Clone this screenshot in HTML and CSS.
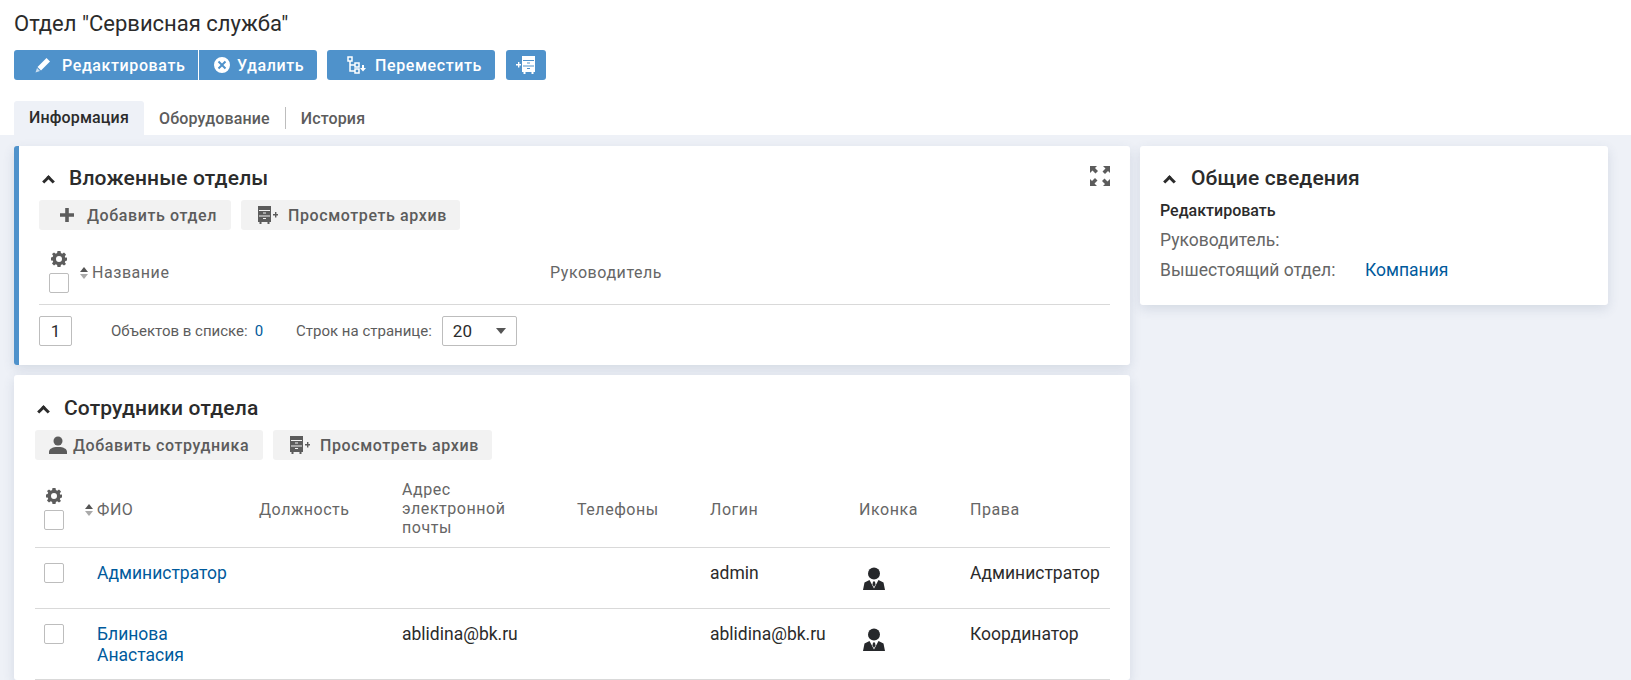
FILE: index.html
```html
<!DOCTYPE html>
<html lang="ru">
<head>
    <meta charset="UTF-8">
    <meta name="viewport" content="width=device-width, initial-scale=1.0">
    <title>Отдел "Сервисная служба"</title>
    <link rel="stylesheet" href="styles.css">
</head>
<body>
<svg class="sprite" width="0" height="0">
    <symbol id="i-pencil" viewBox="0 0 16 16"><path d="M11.500 1 15 4.500 6 13.500 2.500 10Z"/><path d="M2 11 5 14 .5 15.500Z" opacity=".7"/></symbol>
    <symbol id="i-cross" viewBox="0 0 16 16"><path fill-rule="evenodd" d="M8 0a8 8 0 1 0 0 16A8 8 0 0 0 8 0ZM5.200 3.800 8 6.600l2.800-2.800 1.400 1.400L9.400 8l2.800 2.800-1.400 1.400L8 9.400l-2.800 2.800-1.400-1.400L6.600 8 3.800 5.200Z"/></symbol>
    <symbol id="i-tree" viewBox="0 0 20 18"><path fill="none" stroke="currentColor" stroke-width="1.500" d="M1 1h4v4H1zM8 7h4v4H8zM8 13h4v4H8zM3 5v10h5M3 9h5"/><path d="M15 9h2v3h2l-3 3.500-3-3.500h2z"/></symbol>
    <symbol id="i-cabinet" viewBox="0 0 20 18"><path fill-rule="evenodd" d="M6 0h13v16h-1.500v2h-2v-2h-6v2h-2v-2H6ZM7 4v1h11V4ZM7 9.500v1h11v-1ZM11 6.500v1h3v-1ZM11 12v1h3v-1Z"/><path d="M2 6h1.400v2H5v1.400H3.400v2H2v-2H0V8h2Z"/></symbol>
    <symbol id="i-cabinet-right" viewBox="0 0 20 18"><path fill-rule="evenodd" d="M0 0h13v16h-1.500v2h-2v-2h-6v2h-2v-2H0ZM1 4v1h11V4ZM1 9.500v1h11v-1ZM5 6.500v1h3v-1ZM5 12v1h3v-1Z"/><path d="M17 6h1.400v2H20v1.400h-1.600v2H17v-2h-2V8h2Z"/></symbol>
    <symbol id="i-plus" viewBox="0 0 14 14"><path d="M5.200 0h3.600v5.200H14v3.600H8.800V14H5.200V8.800H0V5.200h5.200Z"/></symbol>
    <symbol id="i-gear" viewBox="0 0 16 16"><path fill-rule="evenodd" d="M6.500 0h3l.4 2.100 1.300.6L13 1.500 15 3.600l-1.200 1.800.6 1.300L16 6.600v3l-1.600.4-.6 1.300 1.200 1.700L13 14.500l-1.800-1.200-1.300.6L9.500 16h-3l-.4-2.100-1.300-.6L3 14.500 1 12.400l1.200-1.700-.6-1.300L0 9.500v-3l1.600-.4.600-1.300L1 3.100 3 1.500l1.800 1.200 1.300-.6ZM8 5a3 3 0 1 0 0 6 3 3 0 0 0 0-6Z"/></symbol>
    <symbol id="i-user" viewBox="0 0 18 18"><circle cx="9" cy="5" r="4.500"/><path d="M0 18v-2c0-3 3-5 9-5s9 2 9 5v2Z"/></symbol>
    <symbol id="i-suit" viewBox="0 0 22 24"><circle cx="11" cy="6.500" r="6"/><path d="M6.500 13 1.500 15.500 0 23h22l-1.500-7.500-5-2.500L11 21.500Z"/><path d="M10 14.500h2l.5 3-1.500 2.500-1.500-2.500Z"/></symbol>
    <symbol id="i-expand" viewBox="0 0 20 20"><path d="M0 0h7L5 2l3 3-2.500 2.500-3-3L0 7ZM20 20h-7l2-2-3-3 2.500-2.500 3 3L20 13ZM20 0v7l-2-2-3 3-2.500-2.500 3-3L13 0ZM0 20v-7l2 2 3-3 2.500 2.500-3 3L7 20Z"/></symbol>
</svg>

<header class="page-head">
    <h1>Отдел "Сервисная служба"</h1>
    <div class="actions">
        <div class="btn-group">
            <a class="btn btn-edit"><svg class="ico ico-16"><use href="#i-pencil"/></svg>Редактировать</a>
            <a class="btn btn-del"><svg class="ico ico-16"><use href="#i-cross"/></svg>Удалить</a>
        </div>
        <a class="btn btn-move"><svg class="ico ico-tree"><use href="#i-tree"/></svg>Переместить</a>
        <a class="btn btn-icon"><svg class="ico ico-cab"><use href="#i-cabinet"/></svg></a>
    </div>
    <nav class="tabs">
        <a class="tab active">Информация</a>
        <a class="tab">Оборудование</a>
        <span class="tab-sep"></span>
        <a class="tab">История</a>
    </nav>
</header>

<main class="content">
    <div class="col-main">
        <section class="card card-accent">
            <svg class="expand"><use href="#i-expand"/></svg>
            <h2 class="card-title"><span class="chevron"></span>Вложенные отделы</h2>
            <div class="tools">
                <a class="tool tool-add"><svg class="ico ico-plus"><use href="#i-plus"/></svg>Добавить отдел</a>
                <a class="tool tool-arch"><svg class="ico ico-cab"><use href="#i-cabinet-right"/></svg>Просмотреть архив</a>
            </div>
            <table class="grid grid-sub">
                <colgroup><col class="c-sel"><col class="c-title"><col></colgroup>
                <thead>
                <tr>
                    <th class="sel"><svg class="gear"><use href="#i-gear"/></svg><span class="check"></span></th>
                    <th><span class="sort"></span>Название</th>
                    <th>Руководитель</th>
                </tr>
                </thead>
            </table>
            <div class="pager">
                <span class="page-num">1</span>
                <span class="count">Объектов в списке:<a class="link count-val">0</a></span>
                <span class="per-page">Строк на странице:</span>
                <span class="select">20<i class="caret"></i></span>
            </div>
        </section>

        <section class="card card-staff">
            <h2 class="card-title"><span class="chevron"></span>Сотрудники отдела</h2>
            <div class="tools">
                <a class="tool tool-person"><svg class="ico ico-user"><use href="#i-user"/></svg>Добавить сотрудника</a>
                <a class="tool tool-arch"><svg class="ico ico-cab"><use href="#i-cabinet-right"/></svg>Просмотреть архив</a>
            </div>
            <table class="grid grid-staff">
                <colgroup>
                    <col class="c1"><col class="c2"><col class="c3"><col class="c4"><col class="c5"><col class="c6"><col class="c7"><col>
                </colgroup>
                <thead>
                <tr>
                    <th class="sel"><svg class="gear"><use href="#i-gear"/></svg><span class="check"></span></th>
                    <th><span class="sort"></span>ФИО</th>
                    <th>Должность</th>
                    <th class="wrap">Адрес электронной почты</th>
                    <th>Телефоны</th>
                    <th>Логин</th>
                    <th>Иконка</th>
                    <th>Права</th>
                </tr>
                </thead>
                <tbody>
                <tr class="row-one">
                    <td class="sel"><span class="check"></span></td>
                    <td class="name"><a class="link">Администратор</a></td>
                    <td></td>
                    <td></td>
                    <td></td>
                    <td>admin</td>
                    <td><svg class="suit"><use href="#i-suit"/></svg></td>
                    <td>Администратор</td>
                </tr>
                <tr>
                    <td class="sel"><span class="check"></span></td>
                    <td class="name"><a class="link">Блинова<br>Анастасия</a></td>
                    <td></td>
                    <td>ablidina@bk.ru</td>
                    <td></td>
                    <td>ablidina@bk.ru</td>
                    <td><svg class="suit"><use href="#i-suit"/></svg></td>
                    <td>Координатор</td>
                </tr>
                </tbody>
            </table>
        </section>
    </div>

    <aside class="col-side">
        <section class="card card-info">
            <h2 class="card-title"><span class="chevron"></span>Общие сведения</h2>
            <div class="info-edit">Редактировать</div>
            <div class="info-row"><span class="info-label">Руководитель:</span></div>
            <div class="info-row"><span class="info-label">Вышестоящий отдел:</span><a class="link">Компания</a></div>
        </section>
    </aside>
</main>
</body>
</html>
```

FILE: styles.css
```css
* {
    box-sizing: border-box;
}

html, body {
    height: 100%;
}

body {
    background-color: #eef1f7;
    color: #212121;
    font-family: Roboto, Arial, sans-serif;
    font-size: 16px;
    margin: 0;
    overflow: hidden;
    display: flex;
    flex-direction: column;
}

.sprite {
    position: absolute;
}

.ico {
    fill: currentColor;
    flex: none;
}

.link {
    color: #005a9c;
}

/* header */
.page-head {
    background-color: #fff;
    padding: 12px 0 0 14px;
    height: 135px;
    flex: none;
}

h1 {
    font-size: 22px;
    font-weight: 400;
    line-height: 24px;
    margin: 0 0 14px;
    color: #2b2b2b;
}

.actions {
    display: flex;
    gap: 10px;
    height: 30px;
}

.btn-group {
    display: flex;
    gap: 1px;
}

.btn {
    background-color: #4f92cb;
    color: #fff;
    font-size: 16px;
    font-weight: 500;
    letter-spacing: 0.6px;
    display: flex;
    align-items: center;
    border-radius: 3px;
}

.btn-edit {
    width: 184px;
    padding-left: 21px;
    gap: 11px;
    border-radius: 3px 0 0 3px;
}

.btn-del {
    width: 118px;
    padding-left: 15px;
    gap: 7px;
    border-radius: 0 3px 3px 0;
}

.btn-move {
    width: 168px;
    padding-left: 20px;
    gap: 8px;
}

.btn-icon {
    width: 40px;
    margin-left: 1px;
    justify-content: center;
}

.ico-16 {
    width: 16px;
    height: 16px;
}

.ico-tree {
    width: 20px;
    height: 18px;
}

.ico-cab {
    width: 20px;
    height: 18px;
}

.tabs {
    display: flex;
    align-items: center;
    height: 34px;
    margin-top: 21px;
}

.tab {
    font-size: 16px;
    font-weight: 500;
    color: #5c5c5c;
    letter-spacing: 0.15px;
    padding: 0 15px 0 14px;
}

.tab.active {
    background-color: #eef1f7;
    color: #2b2b2b;
    height: 34px;
    line-height: 34px;
    width: 130px;
    padding: 0 15px;
    border-radius: 3px 3px 0 0;
    margin-right: 1px;
}

.tab-sep + .tab {
    padding-left: 15px;
}

.tab-sep {
    width: 1px;
    height: 22px;
    background-color: #bdbdbd;
}

/* content */
.content {
    display: grid;
    grid-template-columns: 1116px 468px;
    gap: 10px;
    padding: 11px 0 0 14px;
    align-items: start;
}

.col-main {
    display: flex;
    flex-direction: column;
    gap: 10px;
}

.card {
    background-color: #fff;
    border-radius: 3px;
    box-shadow: 0 4px 12px rgba(60, 80, 110, 0.14);
    position: relative;
}

.card-accent {
    border-left: 5px solid #4f92cb;
    height: 219px;
    padding: 17px 20px 0 20px;
}

.card-staff {
    padding: 18px 20px 0 21px;
}

.card-info {
    height: 159px;
    padding: 17px 20px 0 20px;
}

.card-title {
    font-size: 21px;
    font-weight: 500;
    letter-spacing: 0.15px;
    line-height: 30px;
    margin: 0;
    color: #2b2b2b;
    display: flex;
    align-items: center;
}

.chevron {
    width: 9px;
    height: 9px;
    border-left: 3px solid #2b2b2b;
    border-top: 3px solid #2b2b2b;
    transform: rotate(45deg);
    margin: 6px 16px 0 4px;
    flex: none;
}

.card-accent .chevron {
    margin: 6px 16px 0 5px;
}

.card-info .chevron {
    margin: 6px 17px 0 5px;
}

.expand {
    position: absolute;
    right: 20px;
    top: 20px;
    width: 20px;
    height: 20px;
    fill: #5c5c5c;
}

/* tool buttons */
.tools {
    display: flex;
    gap: 10px;
    height: 30px;
    margin-top: 7px;
}

.tool {
    background-color: #f2f2f2;
    color: #5c5c5c;
    font-size: 16px;
    font-weight: 500;
    letter-spacing: 0.6px;
    display: flex;
    align-items: center;
    border-radius: 3px;
}

.tool-add {
    width: 192px;
    padding-left: 21px;
    gap: 13px;
}

.tool-arch {
    width: 219px;
    padding-left: 17px;
    gap: 10px;
}

.tool-person {
    width: 228px;
    padding-left: 14px;
    gap: 6px;
}

.ico-plus {
    width: 14px;
    height: 14px;
}

.ico-user {
    width: 18px;
    height: 18px;
}

/* tables */
.grid {
    width: 100%;
    border-collapse: collapse;
    table-layout: fixed;
}

.grid th {
    font-size: 16px;
    font-weight: 400;
    color: #666;
    letter-spacing: 0.55px;
    line-height: 19px;
    text-align: left;
    padding: 0;
    border-bottom: 1px solid #d9d9d9;
}

.grid th.wrap {
    padding-right: 30px;
}

.grid td {
    font-size: 17.500px;
    line-height: 21px;
    vertical-align: top;
    padding: 15px 0 13px;
    border-bottom: 1px solid #d9d9d9;
    color: #2b2b2b;
}

.grid .sel {
    padding-left: 10px;
    vertical-align: top;
}

.grid th.sel {
    padding-top: 10px;
    padding-bottom: 10px;
}

.check {
    display: block;
    width: 20px;
    height: 20px;
    background-color: #fff;
    border: 1px solid #bdbdbd;
    border-radius: 2px;
}

.gear {
    display: block;
    width: 16px;
    height: 16px;
    margin: 0 0 6px 2px;
    fill: #5c5c5c;
}

.sort {
    position: relative;
    display: inline-block;
    width: 9px;
    height: 12px;
    margin-right: 3px;
    vertical-align: -1px;
}

.sort::before,
.sort::after {
    content: "";
    position: absolute;
    left: 0;
    border-left: 4px solid transparent;
    border-right: 4px solid transparent;
}

.sort::before {
    top: 0;
    border-bottom: 5px solid #555;
}

.sort::after {
    bottom: 0;
    border-top: 5px solid #aaa;
}

.grid-sub {
    margin-top: 11px;
}

.grid-sub th {
    height: 63px;
}

.c-sel {
    width: 41px;
}

.c-title {
    width: 470px;
}

.grid-staff {
    margin-top: 15px;
}

.grid-staff th {
    height: 72px;
    padding-bottom: 2px;
}

.grid-staff th.wrap {
    padding-bottom: 4px;
}

.grid-staff th.sel {
    padding-top: 13px;
}

.grid-staff .sel {
    padding-left: 9px;
}

.c1 { width: 50px; }
.c2 { width: 174px; }
.c3 { width: 143px; }
.c4 { width: 175px; }
.c5 { width: 133px; }
.c6 { width: 149px; }
.c7 { width: 111px; }

.name {
    padding-left: 12px !important;
}

.row-one td {
    height: 61px;
}

.suit {
    display: block;
    width: 22px;
    height: 24px;
    margin: 4px 0 0 4px;
    fill: #26282b;
}

/* pager */
.pager {
    display: flex;
    align-items: center;
    height: 30px;
    margin-top: 11px;
    font-size: 15px;
    color: #5c5c5c;
}

.page-num {
    width: 33px;
    height: 30px;
    line-height: 28px;
    text-align: center;
    font-size: 17px;
    color: #2b2b2b;
    border: 1px solid #bdbdbd;
    border-radius: 2px;
}

.count {
    margin-left: 39px;
}

.count-val {
    margin-left: 7px;
}

.per-page {
    margin-left: 33px;
}

.select {
    width: 75px;
    height: 30px;
    margin-left: 10px;
    padding: 0 10px;
    font-size: 17px;
    color: #2b2b2b;
    border: 1px solid #bdbdbd;
    border-radius: 2px;
    display: flex;
    align-items: center;
    justify-content: space-between;
}

.caret {
    border-left: 5px solid transparent;
    border-right: 5px solid transparent;
    border-top: 6px solid #555;
}

/* side card */
.info-edit {
    font-size: 16px;
    font-weight: 500;
    line-height: 20px;
    color: #2b2b2b;
    margin: 8px 0 1px;
}

.info-row {
    font-size: 17.500px;
    line-height: 20px;
    margin-top: 9px;
}

.info-row + .info-row {
    margin-top: 10px;
}

.info-label {
    color: #666;
    display: inline-block;
    width: 205px;
}
```
